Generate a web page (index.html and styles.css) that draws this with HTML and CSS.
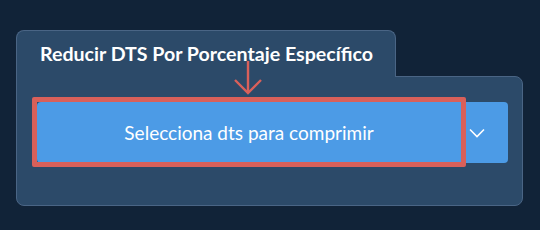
FILE: index.html
```html
<!DOCTYPE html>
<html lang="es">

<head>
  <meta charset="UTF-8">
  <meta name="viewport" content="width=device-width, initial-scale=1.0">
  <title>Reducir DTS</title>
  <link rel="stylesheet" href="styles.css">
</head>

<body>
  <div class="widget">
    <div class="tab">Reducir DTS Por Porcentaje Específico</div>
    <div class="panel">
      <div class="btn-group">
        <button class="btn-main">Selecciona dts para comprimir</button>
        <button class="btn-toggle">
          <svg width="16" height="10" viewBox="0 0 16 10">
            <path d="M1 1.5 L8 8.5 L15 1.5" fill="none" stroke="#fff" stroke-width="1.6" />
          </svg>
        </button>
        <!-- marca de ayuda -->
        <div class="hint-box"></div>
        <svg class="hint-arrow" width="30" height="36" viewBox="0 0 30 36">
          <path d="M15 1 L15 33 M2 20 L15 33 L28 20" fill="none" stroke="#d9605a" stroke-width="2.4" />
        </svg>
      </div>
    </div>
  </div>
</body>

</html>
```

FILE: styles.css
```css
* {
  margin: 0;
  padding: 0;
  box-sizing: border-box;
}

body {
  background-color: #112338;
  font-family: Lato, "Open Sans", sans-serif;
  color: #fff;
}

.widget {
  margin: 30px 0 0 16px;
  width: 507px;
}

.tab {
  position: relative;
  z-index: 1;
  width: 380px;
  height: 47px;
  margin-bottom: -1px;
  padding: 11px 0 0 23px;
  background-color: #2c4a69;
  border: 1px solid #4a6585;
  border-bottom: none;
  border-radius: 8px 8px 0 0;
  font-size: 19.6px;
  font-weight: 700;
  white-space: nowrap;
}

.panel {
  height: 130px;
  padding: 25px 14px 0 20px;
  background-color: #2c4a69;
  border: 1px solid #4a6585;
  border-radius: 0 8px 8px 8px;
}

.btn-group {
  position: relative;
  display: flex;
  height: 61px;
}

.btn-group button {
  border: none;
  background-color: #4c9be6;
  color: #fff;
  font-family: inherit;
  cursor: pointer;
}

.btn-main {
  flex: 1;
  font-size: 19px;
  font-weight: 400;
  border-radius: 4px 0 0 4px;
  padding-left: 4px;
}

.btn-toggle {
  width: 51px;
  display: flex;
  align-items: center;
  padding-left: 12px;
  border-radius: 0 4px 4px 0;
}

.hint-box {
  position: absolute;
  left: -5px;
  top: -5px;
  width: 434px;
  height: 70px;
  border: 5px solid #d9605a;
  border-radius: 2px;
}

.hint-arrow {
  position: absolute;
  z-index: 2;
  left: 196px;
  top: -42px;
}
```
